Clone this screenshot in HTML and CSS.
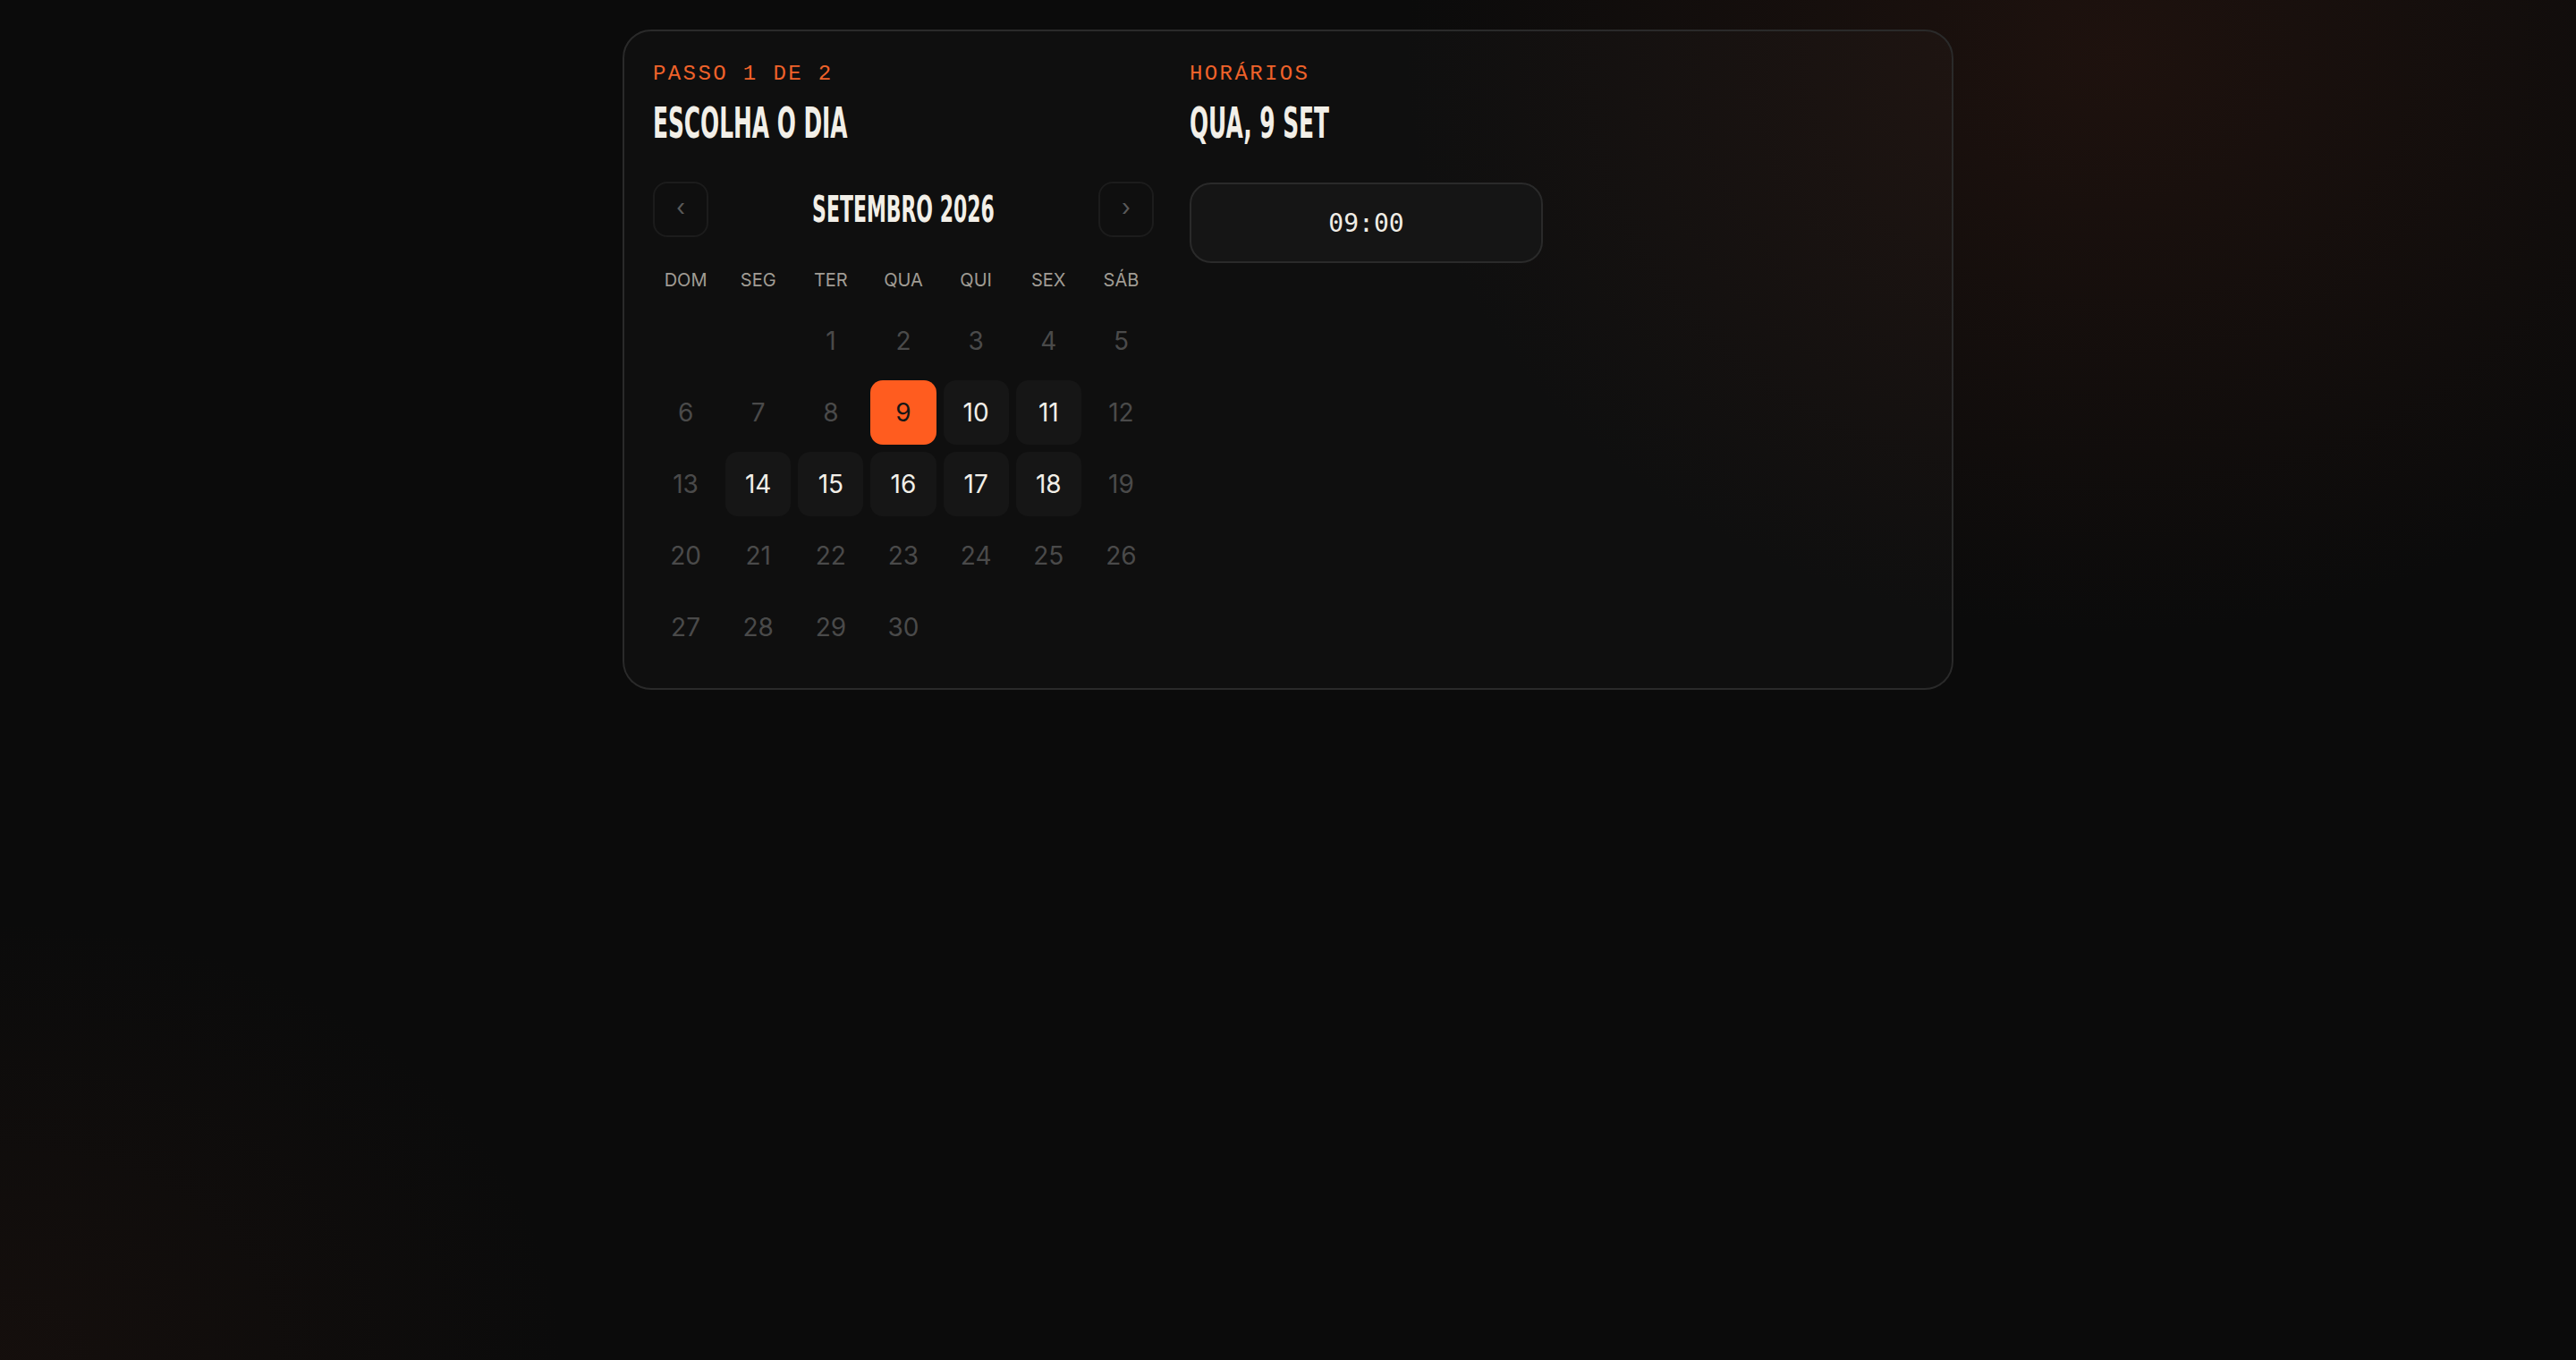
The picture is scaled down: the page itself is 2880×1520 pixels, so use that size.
FILE: index.html
```html
<!DOCTYPE html>
<html lang="pt">
<head>
  <meta charset="UTF-8" />
  <meta name="viewport" content="width=device-width, initial-scale=1" />
  <title>Agendamento</title>
  <link rel="stylesheet" href="styles.css">
</head>
<body>
  <main class="page">
    <section class="booking">
      <div class="col">
        <p class="eyebrow">PASSO 1 DE 2</p>
        <h1 class="title"><span>ESCOLHA O DIA</span></h1>

        <div class="cal-nav">
          <button class="nav-btn">&lsaquo;</button>
          <h2 class="month"><span>SETEMBRO 2026</span></h2>
          <button class="nav-btn">&rsaquo;</button>
        </div>

        <div class="cal-grid">
          <div class="wd">DOM</div>
          <div class="wd">SEG</div>
          <div class="wd">TER</div>
          <div class="wd">QUA</div>
          <div class="wd">QUI</div>
          <div class="wd">SEX</div>
          <div class="wd">SÁB</div>

          <div></div>
          <div></div>
          <div class="day off">1</div>
          <div class="day off">2</div>
          <div class="day off">3</div>
          <div class="day off">4</div>
          <div class="day off">5</div>

          <div class="day off">6</div>
          <div class="day off">7</div>
          <div class="day off">8</div>
          <div class="day selected">9</div>
          <div class="day open">10</div>
          <div class="day open">11</div>
          <div class="day off">12</div>

          <div class="day off">13</div>
          <div class="day open">14</div>
          <div class="day open">15</div>
          <div class="day open">16</div>
          <div class="day open">17</div>
          <div class="day open">18</div>
          <div class="day off">19</div>

          <div class="day off">20</div>
          <div class="day off">21</div>
          <div class="day off">22</div>
          <div class="day off">23</div>
          <div class="day off">24</div>
          <div class="day off">25</div>
          <div class="day off">26</div>

          <div class="day off">27</div>
          <div class="day off">28</div>
          <div class="day off">29</div>
          <div class="day off">30</div>
        </div>
      </div>

      <div class="col">
        <p class="eyebrow">HORÁRIOS</p>
        <h2 class="title"><span>QUA, 9 SET</span></h2>

        <div class="slots">
          <button class="slot">09:00</button>
        </div>
      </div>
    </section>
  </main>
</body>
</html>
```

FILE: styles.css
```css
html, body {
  margin: 0;
  min-height: 100%;
}
body {
  min-height: 1520px;
  background:
    radial-gradient(ellipse 1100px 900px at 82% 4%, rgba(70, 32, 20, 0.32), transparent 72%),
    radial-gradient(ellipse 900px 700px at 0% 100%, rgba(55, 28, 18, 0.22), transparent 70%),
    #0b0b0b;
  font-family: Inter, "Liberation Sans", sans-serif;
  color: #f0ede6;
}
.page {
  padding-top: 33px;
}
.booking {
  width: 1488px;
  box-sizing: border-box;
  margin: 0 auto;
  padding: 32px;
  border: 2px solid #2a2a2a;
  border-radius: 32px;
  background: rgba(255, 255, 255, 0.018);
  display: grid;
  grid-template-columns: 560px 1fr;
  gap: 40px;
}
.eyebrow {
  margin: 0;
  font-family: "Liberation Mono", "DejaVu Sans Mono", monospace;
  font-size: 24px;
  line-height: 31px;
  letter-spacing: 0.1em;
  color: #f0622a;
}
.title {
  margin: 15px 0 0;
  font-family: "DejaVu Sans Condensed", "Liberation Sans", sans-serif;
  font-weight: 700;
  font-size: 48px;
  line-height: 48px;
  color: #f2efe8;
  white-space: nowrap;
}
.title span {
  display: inline-block;
  transform: scaleX(0.575);
  transform-origin: left center;
}
.cal-nav {
  margin-top: 42px;
  display: flex;
  align-items: center;
  justify-content: space-between;
}
.nav-btn {
  width: 62px;
  height: 62px;
  border: 2px solid #1c1c1c;
  border-radius: 16px;
  background: transparent;
  color: #5a5a5a;
  font-family: Inter, sans-serif;
  font-size: 26px;
  line-height: 1;
  padding: 0 0 4px;
}
.month {
  margin: 0;
  font-family: "DejaVu Sans Condensed", "Liberation Sans", sans-serif;
  font-weight: 700;
  font-size: 40px;
  line-height: 48px;
  color: #f2efe8;
  white-space: nowrap;
}
.month span {
  display: inline-block;
  transform: scaleX(0.61);
}
.cal-grid {
  margin-top: 34px;
  display: grid;
  grid-template-columns: repeat(7, 1fr);
  gap: 8px;
}
.wd {
  text-align: center;
  font-size: 20px;
  line-height: 28px;
  color: #a09c94;
  padding-bottom: 10px;
}
.day {
  height: 72px;
  border-radius: 14px;
  display: flex;
  align-items: center;
  justify-content: center;
  font-size: 28px;
}
.day.off {
  color: #4a4a4a;
}
.day.open {
  background: #161616;
  color: #f2efe8;
}
.day.selected {
  background: #ff5c1f;
  color: #161616;
}
.slots {
  margin-top: 43px;
  display: grid;
  grid-template-columns: repeat(2, 1fr);
  gap: 30px;
}
.slot {
  height: 90px;
  border: 2px solid #2a2a2a;
  border-radius: 24px;
  background: #151515;
  color: #f0ede6;
  font-family: "DejaVu Sans Mono", "Liberation Mono", monospace;
  font-size: 28px;
  font-variant-numeric: slashed-zero;
}
```
